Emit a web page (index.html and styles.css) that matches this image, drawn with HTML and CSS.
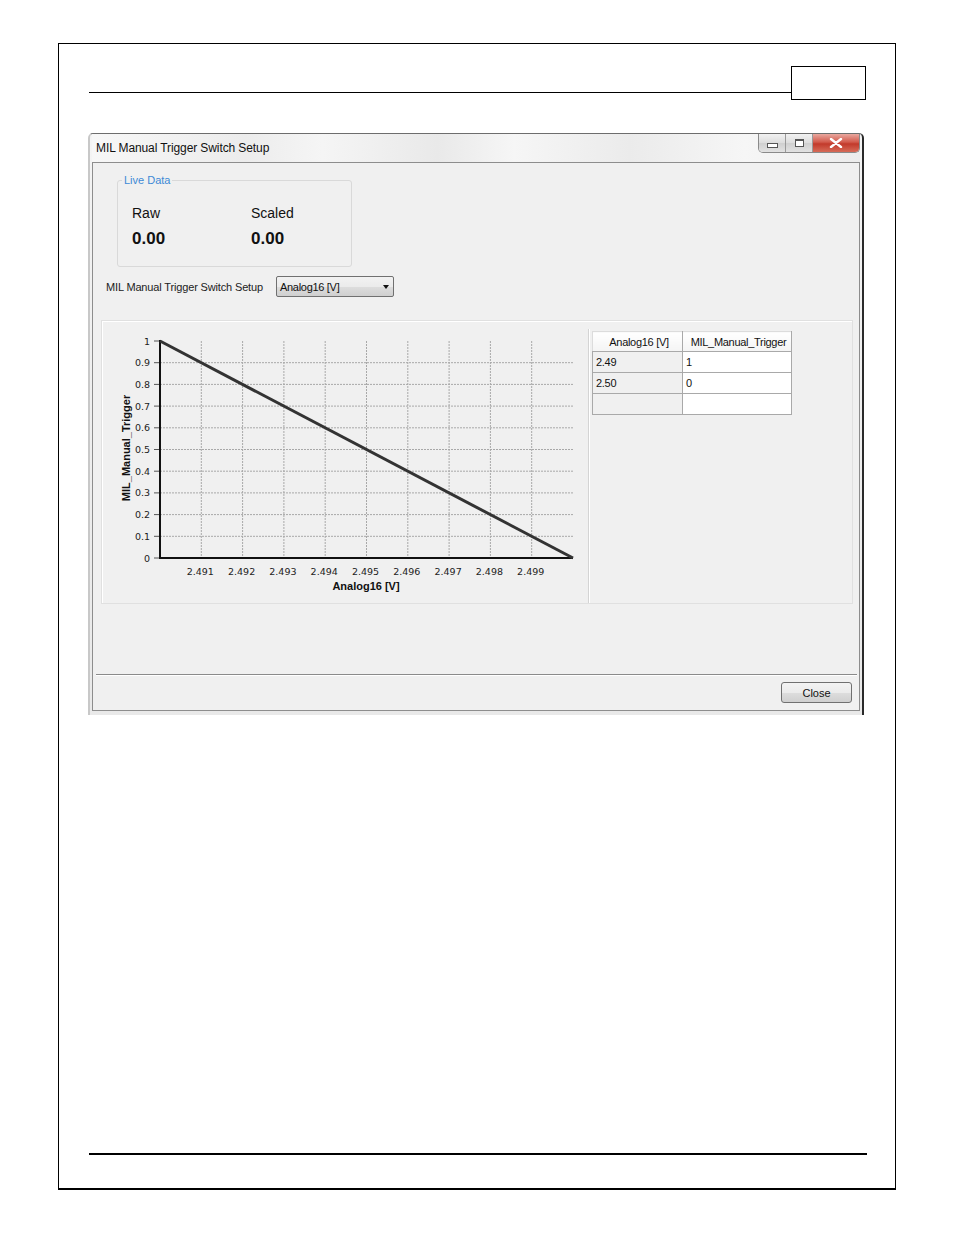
FILE: index.html
```html
<!DOCTYPE html>
<html>
<head>
<meta charset="utf-8">
<link rel="stylesheet" href="styles.css">
</head>
<body>
<div class="page">
  <div class="header">
    <div class="header-line"></div>
    <div class="header-box"></div>
  </div>
  <div class="window">
    <div class="titlebar">
      <span class="title">MIL Manual Trigger Switch Setup</span>
      <div class="caption-btns">
        <div class="cbtn cmin"><span class="min-glyph"></span></div>
        <div class="cbtn cmax"><span class="max-glyph"></span></div>
        <div class="cbtn cclose">
          <svg width="14" height="10" viewBox="0 0 14 10"><path d="M2 1 L12 9 M12 1 L2 9" stroke="#fff" stroke-width="2.4" stroke-linecap="round"/></svg>
        </div>
      </div>
    </div>
    <div class="client">
      <fieldset class="group">
        <legend class="legend">Live Data</legend>
        <div class="live-grid">
          <div class="live-label">Raw</div>
          <div class="live-label">Scaled</div>
          <div class="live-value">0.00</div>
          <div class="live-value">0.00</div>
        </div>
      </fieldset>
      <div class="setup-row">
        <span class="setup-label">MIL Manual Trigger Switch Setup</span>
        <div class="combo"><span class="combo-text">Analog16 [V]</span><span class="combo-arrow"></span></div>
      </div>
      <div class="chart-panel">
        <svg class="chart" width="486" height="282" viewBox="0 0 486 282">
          <g stroke="#a8a8a8" stroke-width="1" stroke-dasharray="2 1">
            <line x1="99.3" y1="20" x2="99.3" y2="237"/>
            <line x1="140.6" y1="20" x2="140.6" y2="237"/>
            <line x1="181.9" y1="20" x2="181.9" y2="237"/>
            <line x1="223.2" y1="20" x2="223.2" y2="237"/>
            <line x1="264.5" y1="20" x2="264.5" y2="237"/>
            <line x1="305.8" y1="20" x2="305.8" y2="237"/>
            <line x1="347.1" y1="20" x2="347.1" y2="237"/>
            <line x1="388.4" y1="20" x2="388.4" y2="237"/>
            <line x1="429.7" y1="20" x2="429.7" y2="237"/>
            <line x1="58" y1="215.3" x2="471" y2="215.3"/>
            <line x1="58" y1="193.6" x2="471" y2="193.6"/>
            <line x1="58" y1="171.9" x2="471" y2="171.9"/>
            <line x1="58" y1="150.2" x2="471" y2="150.2"/>
            <line x1="58" y1="128.5" x2="471" y2="128.5"/>
            <line x1="58" y1="106.8" x2="471" y2="106.8"/>
            <line x1="58" y1="85.1" x2="471" y2="85.1"/>
            <line x1="58" y1="63.4" x2="471" y2="63.4"/>
            <line x1="58" y1="41.7" x2="471" y2="41.7"/>
          </g>
          <g stroke="#555" stroke-width="1">
            <line x1="52" y1="20" x2="58" y2="20"/>
            <line x1="52" y1="41.7" x2="58" y2="41.7"/>
            <line x1="52" y1="63.4" x2="58" y2="63.4"/>
            <line x1="52" y1="85.1" x2="58" y2="85.1"/>
            <line x1="52" y1="106.8" x2="58" y2="106.8"/>
            <line x1="52" y1="128.5" x2="58" y2="128.5"/>
            <line x1="52" y1="150.2" x2="58" y2="150.2"/>
            <line x1="52" y1="171.9" x2="58" y2="171.9"/>
            <line x1="52" y1="193.6" x2="58" y2="193.6"/>
            <line x1="52" y1="215.3" x2="58" y2="215.3"/>
            <line x1="52" y1="237" x2="58" y2="237"/>
          </g>
          <path d="M58 19 L58 237 L471 237" fill="none" stroke="#111" stroke-width="2"/>
          <path d="M58 20 L471 237" fill="none" stroke="#333" stroke-width="3"/>
          <g class="tick-y" text-anchor="end">
            <text x="48" y="23.5">1</text>
            <text x="48" y="45.2">0.9</text>
            <text x="48" y="66.9">0.8</text>
            <text x="48" y="88.6">0.7</text>
            <text x="48" y="110.3">0.6</text>
            <text x="48" y="132">0.5</text>
            <text x="48" y="153.7">0.4</text>
            <text x="48" y="175.4">0.3</text>
            <text x="48" y="197.1">0.2</text>
            <text x="48" y="218.8">0.1</text>
            <text x="48" y="240.5">0</text>
          </g>
          <g class="tick-x" text-anchor="middle">
            <text x="98.3" y="254">2.491</text>
            <text x="139.6" y="254">2.492</text>
            <text x="180.9" y="254">2.493</text>
            <text x="222.2" y="254">2.494</text>
            <text x="263.5" y="254">2.495</text>
            <text x="304.8" y="254">2.496</text>
            <text x="346.1" y="254">2.497</text>
            <text x="387.4" y="254">2.498</text>
            <text x="428.7" y="254">2.499</text>
          </g>
          <text class="axis-title" x="264" y="269" text-anchor="middle">Analog16 [V]</text>
          <text class="axis-title" x="0" y="0" text-anchor="middle" transform="translate(28 127) rotate(-90)">MIL_Manual_Trigger</text>
        </svg>
        <div class="vsep"></div>
        <div class="table-wrap">
          <table class="grid">
            <tr class="head"><th class="c1">Analog16 [V]</th><th class="c2">MIL_Manual_Trigger</th></tr>
            <tr><td class="c1">2.49</td><td class="c2">1</td></tr>
            <tr><td class="c1">2.50</td><td class="c2">0</td></tr>
            <tr><td class="c1"></td><td class="c2"></td></tr>
          </table>
        </div>
      </div>
      <div class="spacer"></div>
      <div class="hsep"></div>
      <div class="button-row">
        <div class="btn">Close</div>
      </div>
    </div>
  </div>
  <div class="page-fill"></div>
  <div class="footer-line"></div>
</div>
</body>
</html>
```
FILE: styles.css
```css
html, body {
  margin: 0;
  padding: 0;
  background: #fff;
}
body {
  width: 954px;
  height: 1235px;
  overflow: hidden;
  font-family: "Liberation Sans", Arial, sans-serif;
}
.page {
  box-sizing: border-box;
  margin: 43px 0 0 58px;
  width: 838px;
  height: 1147px;
  border: 1px solid #000;
  border-bottom-width: 2px;
  display: flex;
  flex-direction: column;
  padding-left: 30px;
}
.header {
  display: flex;
  margin-top: 22px;
  height: 34px;
}
.header-line {
  flex: 1;
  height: 1px;
  background: #000;
  margin-top: 26px;
}
.header-box {
  box-sizing: border-box;
  width: 75px;
  height: 34px;
  border: 1px solid #000;
  margin-right: 29px;
}
.window {
  box-sizing: border-box;
  margin-top: 33px;
  margin-left: -1px;
  width: 776px;
  height: 582px;
  background: linear-gradient(#f4f4f4, #e9e9e9);
  border-left: 2px solid #c8c8c8;
  border-right: 2px solid #2a2a2a;
  border-top: 1px solid #6d6d6d;
  border-radius: 5px 5px 0 0;
  padding: 0 2px 4px 2px;
  display: flex;
  flex-direction: column;
}
.titlebar {
  height: 28px;
  display: flex;
  align-items: flex-start;
  justify-content: space-between;
  background: linear-gradient(90deg, #f7f7f7 0%, #ececec 20%, #f5f5f5 30%, #e9e9e9 45%, #f6f6f6 55%, #ebebeb 70%, #f6f6f6 85%, #ececec 100%);
}
.title {
  font-size: 12px;
  color: #111;
  margin: 7px 0 0 4px;
  letter-spacing: -0.1px;
}
.caption-btns {
  display: flex;
  margin-right: 0;
  height: 18px;
  border: 1px solid #8a8a8a;
  border-top: none;
  border-radius: 0 0 5px 5px;
  overflow: hidden;
}
.cbtn {
  height: 18px;
  display: flex;
  align-items: center;
  justify-content: center;
}
.cmin, .cmax {
  width: 26px;
  background: linear-gradient(#f2f2f2, #dcdcdc 50%, #cfcfcf 51%, #e2e2e2);
  border-right: 1px solid #9a9a9a;
}
.min-glyph {
  width: 9px;
  height: 3px;
  border: 1px solid #555;
  background: #fff;
  margin-top: 5px;
}
.max-glyph {
  width: 7px;
  height: 5px;
  border: 1px solid #555;
  border-top-width: 2px;
  background: #fff;
}
.cclose {
  width: 46px;
  background: linear-gradient(#e9a89f, #d25a4c 45%, #c23a2b 55%, #d66b58);
}
.client {
  flex: 1;
  box-sizing: border-box;
  background: #f0f0f0;
  border: 1px solid #8d8d8d;
  display: flex;
  flex-direction: column;
}
.group {
  box-sizing: border-box;
  margin: 11px 0 0 24px;
  padding: 0;
  width: 235px;
  height: 93px;
  border: 1px solid #d9d9d9;
  border-radius: 3px;
}
.legend {
  margin-left: 4px;
  padding: 0 2px;
  font-size: 11px;
  color: #3d8ad6;
}
.live-grid {
  display: grid;
  grid-template-columns: 119px 100px;
  padding: 19px 0 0 14px;
}
.live-label {
  font-size: 14px;
  line-height: 16px;
  color: #111;
}
.live-value {
  font-size: 17px;
  font-weight: bold;
  line-height: 20px;
  margin-top: 8px;
  color: #111;
}
.setup-row {
  display: flex;
  align-items: center;
  margin: 9px 0 0 13px;
  height: 21px;
}
.setup-label {
  font-size: 11px;
  color: #222;
  width: 170px;
  letter-spacing: -0.15px;
}
.combo {
  box-sizing: border-box;
  width: 118px;
  height: 21px;
  border: 1px solid #707070;
  border-radius: 2px;
  background: linear-gradient(#f2f2f2, #ebebeb 50%, #dddddd 51%, #cfcfcf);
  display: flex;
  align-items: center;
  justify-content: space-between;
  padding: 0 4px 0 3px;
}
.combo-text {
  font-size: 11px;
  color: #111;
  letter-spacing: -0.3px;
}
.combo-arrow {
  width: 0;
  height: 0;
  border-left: 3px solid transparent;
  border-right: 3px solid transparent;
  border-top: 4px solid #111;
}
.chart-panel {
  box-sizing: border-box;
  margin: 23px 0 0 8px;
  width: 752px;
  height: 284px;
  border: 1px solid #e0e0e0;
  box-shadow: inset 1px 1px 0 #fff;
  display: flex;
  align-items: flex-start;
}
.chart {
  display: block;
  flex: none;
}
.tick-y text, .tick-x text {
  font-family: "DejaVu Sans", sans-serif;
  font-size: 9.5px;
  fill: #222;
}
.axis-title {
  font-family: "Liberation Sans", Arial, sans-serif;
  font-size: 11px;
  font-weight: bold;
  fill: #111;
}
.vsep {
  width: 1px;
  height: 274px;
  margin-top: 8px;
  background: #d4d4d4;
  border-right: 1px solid #fff;
  flex: none;
}
.table-wrap {
  padding: 10px 0 0 2px;
}
.grid {
  border-collapse: collapse;
  font-size: 11px;
  letter-spacing: -0.3px;
  color: #111;
}
.grid th, .grid td {
  border: 1px solid #a9a9a9;
  padding: 0 0 0 3px;
  text-align: left;
  font-weight: normal;
  height: 20px;
  box-sizing: border-box;
}
.grid th {
  text-align: center;
  background: linear-gradient(#ffffff, #f4f4f4);
  border-top-color: #dcdcdc;
  border-left-color: #dcdcdc;
}
.grid td {
  height: 21px;
}
.grid .c1 {
  width: 90px;
}
.grid .c2 {
  width: 109px;
}
.grid td.c1 {
  background: #f0f0f0;
}
.grid td.c2 {
  background: #fff;
}
.spacer {
  height: 70px;
}
.hsep {
  margin: 0 2px 0 3px;
  height: 1px;
  background: #8a8a8a;
  border-bottom: 1px solid #fff;
}
.button-row {
  display: flex;
  justify-content: flex-end;
  padding: 6px 7px 0 0;
}
.btn {
  box-sizing: border-box;
  width: 71px;
  height: 21px;
  border: 1px solid #707070;
  border-radius: 3px;
  background: linear-gradient(#f3f3f3, #ebebeb 50%, #dddddd 51%, #cfcfcf);
  font-size: 11px;
  color: #111;
  display: flex;
  align-items: center;
  justify-content: center;
}
.page-fill {
  flex: 1;
}
.footer-line {
  height: 2px;
  background: #000;
  margin: 0 28px 33px 0;
}
```
